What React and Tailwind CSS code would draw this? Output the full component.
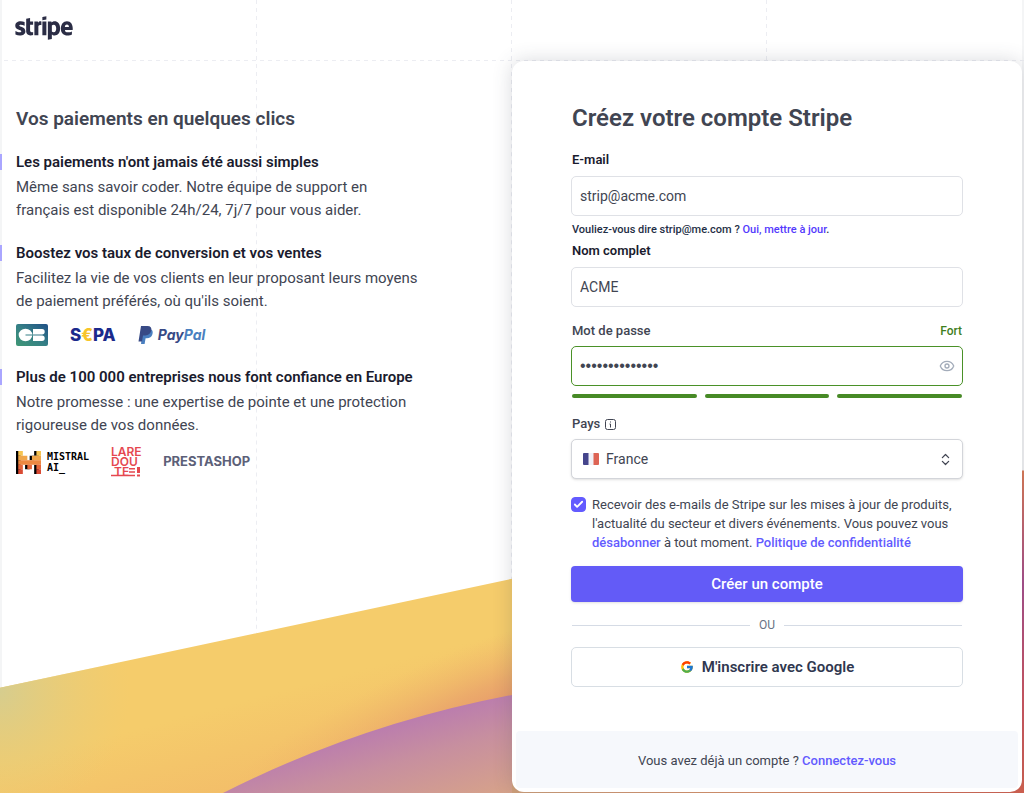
import React, { useState } from 'react'
import { FaStripe } from 'react-icons/fa'
import { FcGoogle } from 'react-icons/fc'
import { Check, ChevronsUpDown, Eye } from 'lucide-react'

const LINK = 'font-medium text-[#635bff]'
const FIELD = 'block h-10 w-full rounded-[5px] border bg-white px-2 text-[#414552] outline-none'

function StripeLogo() {
  return (
    <a href="#" aria-label="Stripe" className="-ml-px block w-fit text-[#2b2d45]">
      <FaStripe className="h-[46px] w-[58px]" />
    </a>
  )
}

function CbLogo() {
  return (
    <svg width="32" height="22" viewBox="0 0 32 22" role="img" aria-label="CB">
      <defs>
        <linearGradient id="cb" x1="0" y1="1" x2="1" y2="0">
          <stop offset="0" stopColor="#3f9775" />
          <stop offset="0.5" stopColor="#357f86" />
          <stop offset="1" stopColor="#1f4f86" />
        </linearGradient>
      </defs>
      <rect width="32" height="22" rx="2" fill="url(#cb)" />
      <ellipse cx="9.500" cy="11" rx="6.800" ry="6.200" fill="#fff" />
      <path d="M9.500 10.500h7v1h-7z" fill="#357f86" />
      <path d="M17 5h9a2.700 2.700 0 0 1 0 5.400h-9zM17 11.600h9a2.700 2.700 0 0 1 0 5.400h-9z" fill="#fff" />
    </svg>
  )
}

function SepaLogo() {
  return (
    <span className="font-[Inter,sans-serif] text-[17px] leading-5 font-extrabold text-[#1b2a8c]">
      S<span className="text-[#f7c52b]">€</span>PA
    </span>
  )
}

function PaypalLogo() {
  return (
    <span className="flex items-center gap-1">
      <svg width="16" height="20" viewBox="0 0 16 20" aria-hidden="true">
        <path d="M5 4h7c2.500.5 3.200 2.600 2.500 5-.8 3-2.900 4.300-5.600 4.300H7.600L6.600 19H3z" fill="#4a7fc0" />
        <path d="M3 1h6.500c3 0 4.400 1.700 3.800 4.600-.6 3.200-2.800 4.800-5.900 4.800H5L4 16.500H.5z" fill="#384a86" />
      </svg>
      <span className="font-[Inter,sans-serif] text-[14px] leading-5 font-bold text-[#384a86] italic">
        Pay<span className="text-[#4a7fc0]">Pal</span>
      </span>
    </span>
  )
}

function MistralLogo() {
  return (
    <span className="flex items-center gap-1.5">
      <svg width="25" height="23" viewBox="0 0 256 233" aria-hidden="true">
        <path d="M0 0h47v233H0zM186 0h47v47h-47zM140 47h46v46h-46zM93 140h47v46H93zM186 140h47v93h-47z" fill="#000" />
        <path d="M23 0h47v47H23zM209 0h47v47h-47z" fill="#f5c451" />
        <path d="M23 47h93v46H23zM163 47h93v46h-93z" fill="#f0a64a" />
        <path d="M23 93h233v47H23z" fill="#ec8842" />
        <path d="M23 140h47v46H23zM116 140h47v46h-47zM209 140h47v46h-47z" fill="#e5663b" />
        <path d="M23 186h47v47H23zM209 186h47v47h-47z" fill="#d94a33" />
      </svg>
      <span className="font-['DejaVu_Sans_Mono',monospace] text-[10px] leading-[11px] font-bold text-black">
        MISTRAL
        <br />
        AI_
      </span>
    </span>
  )
}

function RedouteLogo() {
  return (
    <svg
      className="overflow-visible"
      width="30"
      height="30"
      viewBox="0 0 30 30"
      role="img"
      aria-label="La Redoute"
      fill="#e5484f"
    >
      <g fontFamily="Inter, sans-serif" fontSize="12" fontWeight="600">
        <text x="0" y="9">LARE</text>
        <text x="0" y="19">DOU</text>
        <text x="3" y="29">TE</text>
      </g>
      <path d="M18 21h6v1.500h-6zM18 24.200h6v1.500h-6zM0 27.800h24v1.500H0zM26 20h3v6h-3zM26 27.500h3v2h-3z" />
    </svg>
  )
}

const POINTS = [
  {
    title: "Les paiements n'ont jamais été aussi simples",
    lines: ['Même sans savoir coder. Notre équipe de support en', 'français est disponible 24h/24, 7j/7 pour vous aider.'],
  },
  {
    title: 'Boostez vos taux de conversion et vos ventes',
    lines: ['Facilitez la vie de vos clients en leur proposant leurs moyens', "de paiement préférés, où qu'ils soient."],
    logos: (
      <div className="mt-[11px] flex items-center gap-[22px]">
        <CbLogo />
        <SepaLogo />
        <PaypalLogo />
      </div>
    ),
  },
  {
    title: 'Plus de 100 000 entreprises nous font confiance en Europe',
    lines: ['Notre promesse : une expertise de pointe et une protection', 'rigoureuse de vos données.'],
    logos: (
      <div className="mt-2.5 flex items-center gap-[22px]">
        <MistralLogo />
        <RedouteLogo />
        <span className="font-[Inter,sans-serif] text-[13px] font-bold text-[#5c6078]">PRESTASHOP</span>
      </div>
    ),
  },
]

function Point({ title, lines, logos }) {
  return (
    <section>
      <h2 className="-ml-4 border-l-2 border-[#aaa6ff] pl-3.5 text-[15px] leading-4 font-semibold text-[#1a1b2e]">
        {title}
      </h2>
      <p className="mt-1.5 text-[15px] leading-[23px] text-[#414552]">
        {lines[0]}
        <br />
        {lines[1]}
      </p>
      {logos}
    </section>
  )
}

// Guide lines and the coloured wave behind the page
function Backdrop() {
  return (
    <svg
      className="absolute inset-0 h-full w-full"
      viewBox="0 0 1024 793"
      preserveAspectRatio="none"
      aria-hidden="true"
    >
      <defs>
        <linearGradient id="gold" gradientUnits="userSpaceOnUse" x1="200" y1="640" x2="250" y2="830">
          <stop offset="0" stopColor="#f5cc6b" />
          <stop offset="0.35" stopColor="#f5cc6b" />
          <stop offset="0.8" stopColor="#f3be69" />
          <stop offset="1" stopColor="#eaaa6a" />
        </linearGradient>
        <radialGradient id="sage" gradientUnits="userSpaceOnUse" cx="0" cy="690" r="130">
          <stop offset="0" stopColor="#d6cd8e" />
          <stop offset="1" stopColor="#e8cc78" stopOpacity="0" />
        </radialGradient>
        <radialGradient
          id="ember"
          gradientUnits="userSpaceOnUse"
          cx="0"
          cy="0"
          r="1"
          gradientTransform="translate(520 705) rotate(-20) scale(320 75)"
        >
          <stop offset="0" stopColor="#e5936b" />
          <stop offset="0.4" stopColor="#e8a06b" stopOpacity="0.7" />
          <stop offset="1" stopColor="#f0b56a" stopOpacity="0" />
        </radialGradient>
        <linearGradient id="mauve" gradientUnits="userSpaceOnUse" x1="470" y1="695" x2="500" y2="800">
          <stop offset="0" stopColor="#b97ab0" />
          <stop offset="0.4" stopColor="#c78f9f" />
          <stop offset="1" stopColor="#d8a488" />
        </linearGradient>
        <linearGradient id="edge" x1="0" y1="0" x2="0" y2="1">
          <stop offset="0" stopColor="#dc7a55" />
          <stop offset="0.35" stopColor="#a84f8c" />
          <stop offset="0.7" stopColor="#cf5560" />
          <stop offset="1" stopColor="#d2604f" />
        </linearGradient>
        <linearGradient id="base" x1="0" y1="0" x2="1" y2="0">
          <stop offset="0" stopColor="#d0a07a" />
          <stop offset="0.5" stopColor="#dc9068" />
          <stop offset="1" stopColor="#d2604f" />
        </linearGradient>
      </defs>
      <path d="M0 0h2v793H0zM1022 0h2v793h-2z" fill="#f4f5f6" />
      <g stroke="#ecedf2" strokeDasharray="4 4" fill="none">
        <path d="M256.500 0V793M511.500 0V793M766.500 0V60M4 60.500H1024" />
      </g>
      <path d="M0 687L512 578V793H0z" fill="url(#gold)" />
      <path d="M0 687L512 578V793H0z" fill="url(#sage)" />
      <path d="M0 687L512 578V793H0z" fill="url(#ember)" />
      <path d="M221 793Q359 723 512 694V793z" fill="url(#mauve)" />
      <path d="M1000 470h24V793h-24z" fill="url(#edge)" />
      <path d="M512 780h512v13H512z" fill="url(#base)" />
    </svg>
  )
}

function InfoIcon() {
  return (
    <svg width="11" height="11" viewBox="0 0 11 11" fill="none" stroke="#414552" aria-hidden="true">
      <rect x="0.500" y="0.500" width="10" height="10" rx="2" />
      <path d="M4.500 5H5.500V8.500M5.500 2.500V3.500" />
    </svg>
  )
}

function Flag() {
  return (
    <svg width="16" height="12" viewBox="0 0 16 12" aria-hidden="true">
      <rect width="16" height="12" rx="1" fill="#f1f1f7" />
      <path d="M1 0h4.500v12H1a1 1 0 0 1-1-1V1a1 1 0 0 1 1-1z" fill="#45458c" />
      <path d="M10.500 0H15a1 1 0 0 1 1 1v10a1 1 0 0 1-1 1h-4.500z" fill="#dd6455" />
    </svg>
  )
}

function SignupForm() {
  const [email, setEmail] = useState('strip@acme.com')
  const [name, setName] = useState('ACME')
  const [password, setPassword] = useState('motdepasse2024')
  const [visible, setVisible] = useState(false)
  const [news, setNews] = useState(true)

  return (
    <form className="px-[59px] pt-[41px]" onSubmit={(e) => e.preventDefault()}>
      <h1 className="px-px text-[24px] leading-8 font-semibold text-[#414552]">Créez votre compte Stripe</h1>

      <label htmlFor="email" className="mt-4 block px-px text-[13px] leading-5 font-semibold text-[#1a1b2e]">
        E-mail
      </label>
      <input
        id="email"
        type="email"
        value={email}
        onChange={(e) => setEmail(e.target.value)}
        className={`${FIELD} mt-1.5 border-[#dfe1e6] text-[14px]`}
      />
      <p className="mt-1 px-px text-[11px] leading-5 font-medium text-[#1f2f46]">
        Vouliez-vous dire strip@me.com ?{' '}
        <a href="#" className="text-[#533afd]" onClick={() => setEmail('strip@me.com')}>
          Oui, mettre à jour
        </a>
        .
      </p>

      <label htmlFor="name" className="mt-px block px-px text-[13px] leading-5 font-semibold text-[#1a1b2e]">
        Nom complet
      </label>
      <input
        id="name"
        value={name}
        onChange={(e) => setName(e.target.value)}
        className={`${FIELD} mt-1.5 border-[#dfe1e6] text-[14px]`}
      />

      <div className="mt-3.5 flex items-center justify-between px-px leading-5">
        <label htmlFor="password" className="text-[13px] font-medium text-[#414552]">
          Mot de passe
        </label>
        <span className="text-[12px] font-medium text-[#3f7f1e]">Fort</span>
      </div>
      <div className="relative mt-[5px]">
        <input
          id="password"
          type={visible ? 'text' : 'password'}
          value={password}
          onChange={(e) => setPassword(e.target.value)}
          className={`${FIELD} border-[#4a9128] font-['Liberation_Sans',sans-serif] text-[16px]`}
        />
        <button
          type="button"
          aria-label="Afficher le mot de passe"
          onClick={() => setVisible(!visible)}
          className="absolute top-3 right-2 text-[#a3acba]"
        >
          <Eye size={16} strokeWidth={2} />
        </button>
      </div>
      <div className="mt-2 grid grid-cols-3 gap-2 px-px">
        <div className="h-1 rounded-full bg-[#478a26]" />
        <div className="h-1 rounded-full bg-[#478a26]" />
        <div className="h-1 rounded-full bg-[#478a26]" />
      </div>

      <label
        htmlFor="country"
        className="mt-4 flex items-center gap-[5px] px-px text-[13px] leading-5 font-medium text-[#414552]"
      >
        Pays
        <InfoIcon />
      </label>
      <div className="relative mt-[5px]">
        <select
          id="country"
          className="block h-10 w-full appearance-none rounded-[5px] border border-[#d3d5da] bg-white pl-[34px] text-[14px] text-[#414552] shadow-sm outline-none"
        >
          <option>France</option>
        </select>
        <span className="pointer-events-none absolute inset-y-0 left-3 flex items-center">
          <Flag />
        </span>
        <span className="pointer-events-none absolute inset-y-0 right-2.5 flex items-center text-[#414552]">
          <ChevronsUpDown size={15} />
        </span>
      </div>

      <div className="mt-4 flex gap-1.5">
        <span className="relative mt-0.5 size-[15px] shrink-0">
          <input
            id="news"
            type="checkbox"
            checked={news}
            onChange={(e) => setNews(e.target.checked)}
            className="block size-[15px] appearance-none rounded border border-[#d3d5da] bg-white checked:border-[#635bff] checked:bg-[#635bff]"
          />
          {news && (
            <Check size={11} strokeWidth={4} className="pointer-events-none absolute top-0.5 left-0.5 text-white" />
          )}
        </span>
        <div className="text-[13px] leading-[19px] text-[#414552]">
          <label htmlFor="news">
            Recevoir des e-mails de Stripe sur les mises à jour de produits, l'actualité du secteur et divers
            événements.
          </label>{' '}
          Vous pouvez vous <a href="#" className={LINK}>désabonner</a> à tout moment.{' '}
          <a href="#" className={LINK}>Politique de confidentialité</a>
        </div>
      </div>

      <button
        type="submit"
        className="mt-3.5 block h-9 w-full rounded-[4px] bg-[#635bf7] text-[15px] font-medium text-white shadow-sm"
      >
        Créer un compte
      </button>

      <div className="mt-[13px] mb-3 flex items-center gap-[9px] px-px text-[12px] leading-5 text-[#687385]">
        <span className="h-px flex-1 bg-[#d5dbe5]" />
        OU
        <span className="h-px flex-1 bg-[#d5dbe5]" />
      </div>

      <button
        type="button"
        className="flex h-10 w-full items-center justify-center gap-2 rounded-[5px] border border-[#d8dee4] bg-white text-[15px] font-semibold text-[#30374f]"
      >
        <FcGoogle size={14} />
        M'inscrire avec Google
      </button>
    </form>
  )
}

export default function App() {
  return (
    <div className="relative min-h-screen overflow-hidden bg-white font-[Roboto,sans-serif]">
      <Backdrop />
      <div className="relative flex flex-col">
        <header className="flex h-[61px] items-start px-4 pt-[5px]">
          <StripeLogo />
        </header>
        <div className="grid grid-cols-2">
          <main className="flex flex-col gap-[23px] pt-[46px] pl-4">
            <h1 className="text-[19px] leading-6 font-semibold text-[#414552]">Vos paiements en quelques clics</h1>
            {POINTS.map((point) => (
              <Point key={point.title} {...point} />
            ))}
          </main>
          <div className="mr-0.5 mb-0.5 rounded-xl bg-white shadow-[0_0_20px_rgba(60,66,87,0.2)]">
            <SignupForm />
            <footer className="mx-1 mt-11 mb-1 rounded bg-[#f6f8fc] pt-5 pb-[17px] text-center text-[13px] leading-5 text-[#414552]">
              Vous avez déjà un compte ? <a href="#" className={LINK}>Connectez-vous</a>
            </footer>
          </div>
        </div>
      </div>
    </div>
  )
}
